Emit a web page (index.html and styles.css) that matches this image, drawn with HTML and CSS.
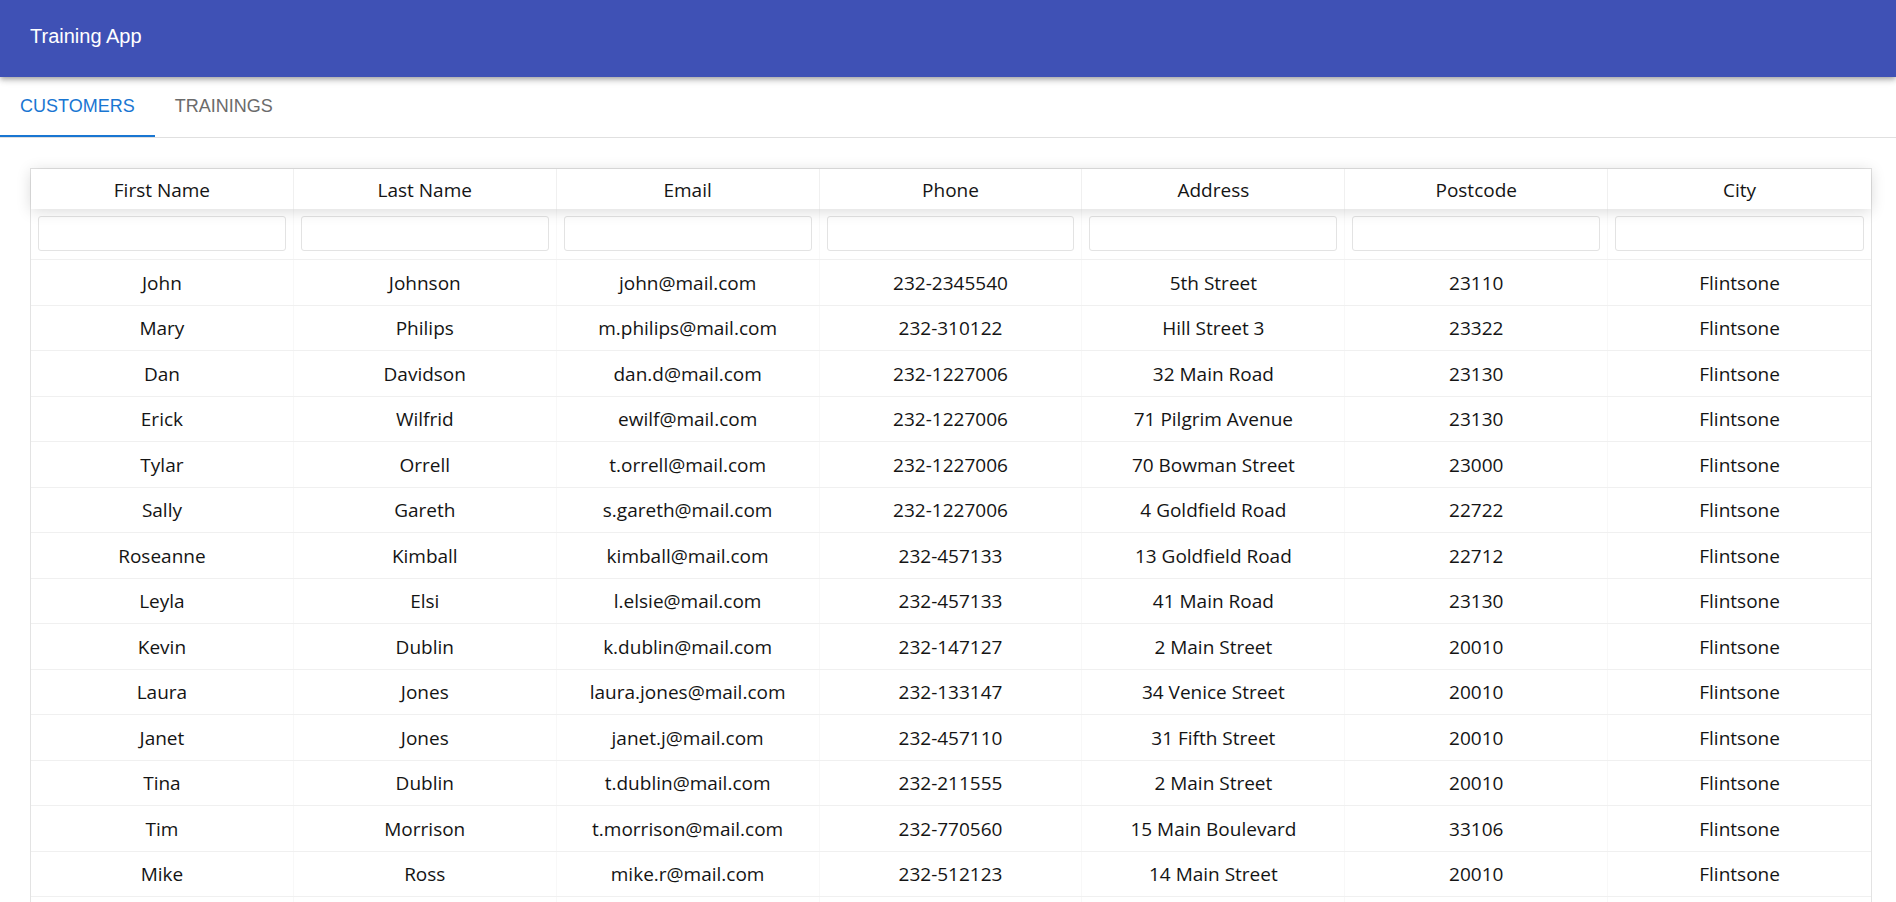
FILE: index.html
```html
<!DOCTYPE html>
<html lang="en">
<head>
<meta charset="utf-8">
<title>Training App</title>
<link rel="stylesheet" href="styles.css">
</head>
<body>
<header class="appbar"><div class="appbar-title">Training App</div></header>
<nav class="tabs">
  <div class="tab tab-active">Customers</div>
  <div class="tab">Trainings</div>
</nav>
<main class="content">
  <div class="rtable">
    <div class="rt-head">
      <div class="rt-th">First Name</div>
      <div class="rt-th">Last Name</div>
      <div class="rt-th">Email</div>
      <div class="rt-th">Phone</div>
      <div class="rt-th">Address</div>
      <div class="rt-th">Postcode</div>
      <div class="rt-th">City</div>
    </div>
    <div class="rt-filters">
      <div class="rt-fc"><input class="rt-input" type="text"></div>
      <div class="rt-fc"><input class="rt-input" type="text"></div>
      <div class="rt-fc"><input class="rt-input" type="text"></div>
      <div class="rt-fc"><input class="rt-input" type="text"></div>
      <div class="rt-fc"><input class="rt-input" type="text"></div>
      <div class="rt-fc"><input class="rt-input" type="text"></div>
      <div class="rt-fc"><input class="rt-input" type="text"></div>
    </div>
    <div class="rt-body">
      <div class="rt-tr"><div class="rt-td">John</div><div class="rt-td">Johnson</div><div class="rt-td">john@mail.com</div><div class="rt-td">232-2345540</div><div class="rt-td">5th Street</div><div class="rt-td">23110</div><div class="rt-td">Flintsone</div></div>
      <div class="rt-tr"><div class="rt-td">Mary</div><div class="rt-td">Philips</div><div class="rt-td">m.philips@mail.com</div><div class="rt-td">232-310122</div><div class="rt-td">Hill Street 3</div><div class="rt-td">23322</div><div class="rt-td">Flintsone</div></div>
      <div class="rt-tr"><div class="rt-td">Dan</div><div class="rt-td">Davidson</div><div class="rt-td">dan.d@mail.com</div><div class="rt-td">232-1227006</div><div class="rt-td">32 Main Road</div><div class="rt-td">23130</div><div class="rt-td">Flintsone</div></div>
      <div class="rt-tr"><div class="rt-td">Erick</div><div class="rt-td">Wilfrid</div><div class="rt-td">ewilf@mail.com</div><div class="rt-td">232-1227006</div><div class="rt-td">71 Pilgrim Avenue</div><div class="rt-td">23130</div><div class="rt-td">Flintsone</div></div>
      <div class="rt-tr"><div class="rt-td">Tylar</div><div class="rt-td">Orrell</div><div class="rt-td">t.orrell@mail.com</div><div class="rt-td">232-1227006</div><div class="rt-td">70 Bowman Street</div><div class="rt-td">23000</div><div class="rt-td">Flintsone</div></div>
      <div class="rt-tr"><div class="rt-td">Sally</div><div class="rt-td">Gareth</div><div class="rt-td">s.gareth@mail.com</div><div class="rt-td">232-1227006</div><div class="rt-td">4 Goldfield Road</div><div class="rt-td">22722</div><div class="rt-td">Flintsone</div></div>
      <div class="rt-tr"><div class="rt-td">Roseanne</div><div class="rt-td">Kimball</div><div class="rt-td">kimball@mail.com</div><div class="rt-td">232-457133</div><div class="rt-td">13 Goldfield Road</div><div class="rt-td">22712</div><div class="rt-td">Flintsone</div></div>
      <div class="rt-tr"><div class="rt-td">Leyla</div><div class="rt-td">Elsi</div><div class="rt-td">l.elsie@mail.com</div><div class="rt-td">232-457133</div><div class="rt-td">41 Main Road</div><div class="rt-td">23130</div><div class="rt-td">Flintsone</div></div>
      <div class="rt-tr"><div class="rt-td">Kevin</div><div class="rt-td">Dublin</div><div class="rt-td">k.dublin@mail.com</div><div class="rt-td">232-147127</div><div class="rt-td">2 Main Street</div><div class="rt-td">20010</div><div class="rt-td">Flintsone</div></div>
      <div class="rt-tr"><div class="rt-td">Laura</div><div class="rt-td">Jones</div><div class="rt-td">laura.jones@mail.com</div><div class="rt-td">232-133147</div><div class="rt-td">34 Venice Street</div><div class="rt-td">20010</div><div class="rt-td">Flintsone</div></div>
      <div class="rt-tr"><div class="rt-td">Janet</div><div class="rt-td">Jones</div><div class="rt-td">janet.j@mail.com</div><div class="rt-td">232-457110</div><div class="rt-td">31 Fifth Street</div><div class="rt-td">20010</div><div class="rt-td">Flintsone</div></div>
      <div class="rt-tr"><div class="rt-td">Tina</div><div class="rt-td">Dublin</div><div class="rt-td">t.dublin@mail.com</div><div class="rt-td">232-211555</div><div class="rt-td">2 Main Street</div><div class="rt-td">20010</div><div class="rt-td">Flintsone</div></div>
      <div class="rt-tr"><div class="rt-td">Tim</div><div class="rt-td">Morrison</div><div class="rt-td">t.morrison@mail.com</div><div class="rt-td">232-770560</div><div class="rt-td">15 Main Boulevard</div><div class="rt-td">33106</div><div class="rt-td">Flintsone</div></div>
      <div class="rt-tr"><div class="rt-td">Mike</div><div class="rt-td">Ross</div><div class="rt-td">mike.r@mail.com</div><div class="rt-td">232-512123</div><div class="rt-td">14 Main Street</div><div class="rt-td">20010</div><div class="rt-td">Flintsone</div></div>
      <div class="rt-tr"><div class="rt-td"></div><div class="rt-td"></div><div class="rt-td"></div><div class="rt-td"></div><div class="rt-td"></div><div class="rt-td"></div><div class="rt-td"></div></div>
    </div>
  </div>
</main>
</body>
</html>
```
FILE: styles.css
```css
html, body {
  margin: 0;
  padding: 0;
  background: #fff;
}
body {
  height: 902px;
  overflow: hidden;
  font-family: "Liberation Sans", Arial, sans-serif;
}
.appbar {
  position: relative;
  z-index: 2;
  height: 77px;
  box-sizing: border-box;
  padding: 0 0 4px 30px;
  display: flex;
  align-items: center;
  background: #3f51b5;
  color: #fff;
  box-shadow: 0 2px 4px -1px rgba(0,0,0,0.2), 0 4px 5px 0 rgba(0,0,0,0.14), 0 1px 10px 0 rgba(0,0,0,0.12);
}
.appbar-title {
  font-size: 20px;
  line-height: 23px;
}
.tabs {
  display: flex;
  height: 61px;
  box-sizing: border-box;
  border-bottom: 1px solid #e0e0e0;
}
.tab {
  height: 60px;
  box-sizing: border-box;
  padding: 0 20px;
  display: flex;
  align-items: center;
  font-size: 18px;
  line-height: 21px;
  text-transform: uppercase;
  color: #6b6b6b;
  border-bottom: 2px solid transparent;
}
.tab-active {
  color: #1976d2;
  border-bottom-color: #1976d2;
}
.content {
  margin: 30px 24px 0 30px;
}
.rtable {
  border: 1px solid #e3e3e3;
  font-family: "Open Sans", "Noto Sans", sans-serif;
  font-size: 19px;
  color: #141414;
}
.rt-head, .rt-filters, .rt-tr {
  display: grid;
  grid-template-columns: repeat(7, 1fr);
}
.rt-head {
  position: relative;
  z-index: 1;
  background: #fff;
  box-shadow: 0 2px 15px 0 rgba(0,0,0,0.15);
}
.rt-th {
  padding: 8px 5px 6px;
  line-height: 26px;
  text-align: center;
  border-right: 1px solid #f0f0f0;
}
.rt-th:last-child, .rt-fc:last-child, .rt-td:last-child {
  border-right: none;
}
.rt-filters {
  border-bottom: 1px solid #f0f0f0;
}
.rt-fc {
  padding: 7px 7px 8px;
  border-right: 1px solid #f8f8f8;
}
.rt-input {
  display: block;
  width: 100%;
  height: 35px;
  box-sizing: border-box;
  margin: 0;
  padding: 5px 7px;
  border: 1px solid #e3e3e3;
  border-radius: 3px;
  background: #fff;
  font: inherit;
  outline: none;
}
.rt-tr {
  height: 45.5px;
  box-sizing: border-box;
  border-bottom: 1px solid #f0f0f0;
}
.rt-td {
  display: flex;
  align-items: center;
  justify-content: center;
  padding: 1px 5px 0;
  line-height: 26px;
  border-right: 1px solid #f8f8f8;
  white-space: nowrap;
}
```
